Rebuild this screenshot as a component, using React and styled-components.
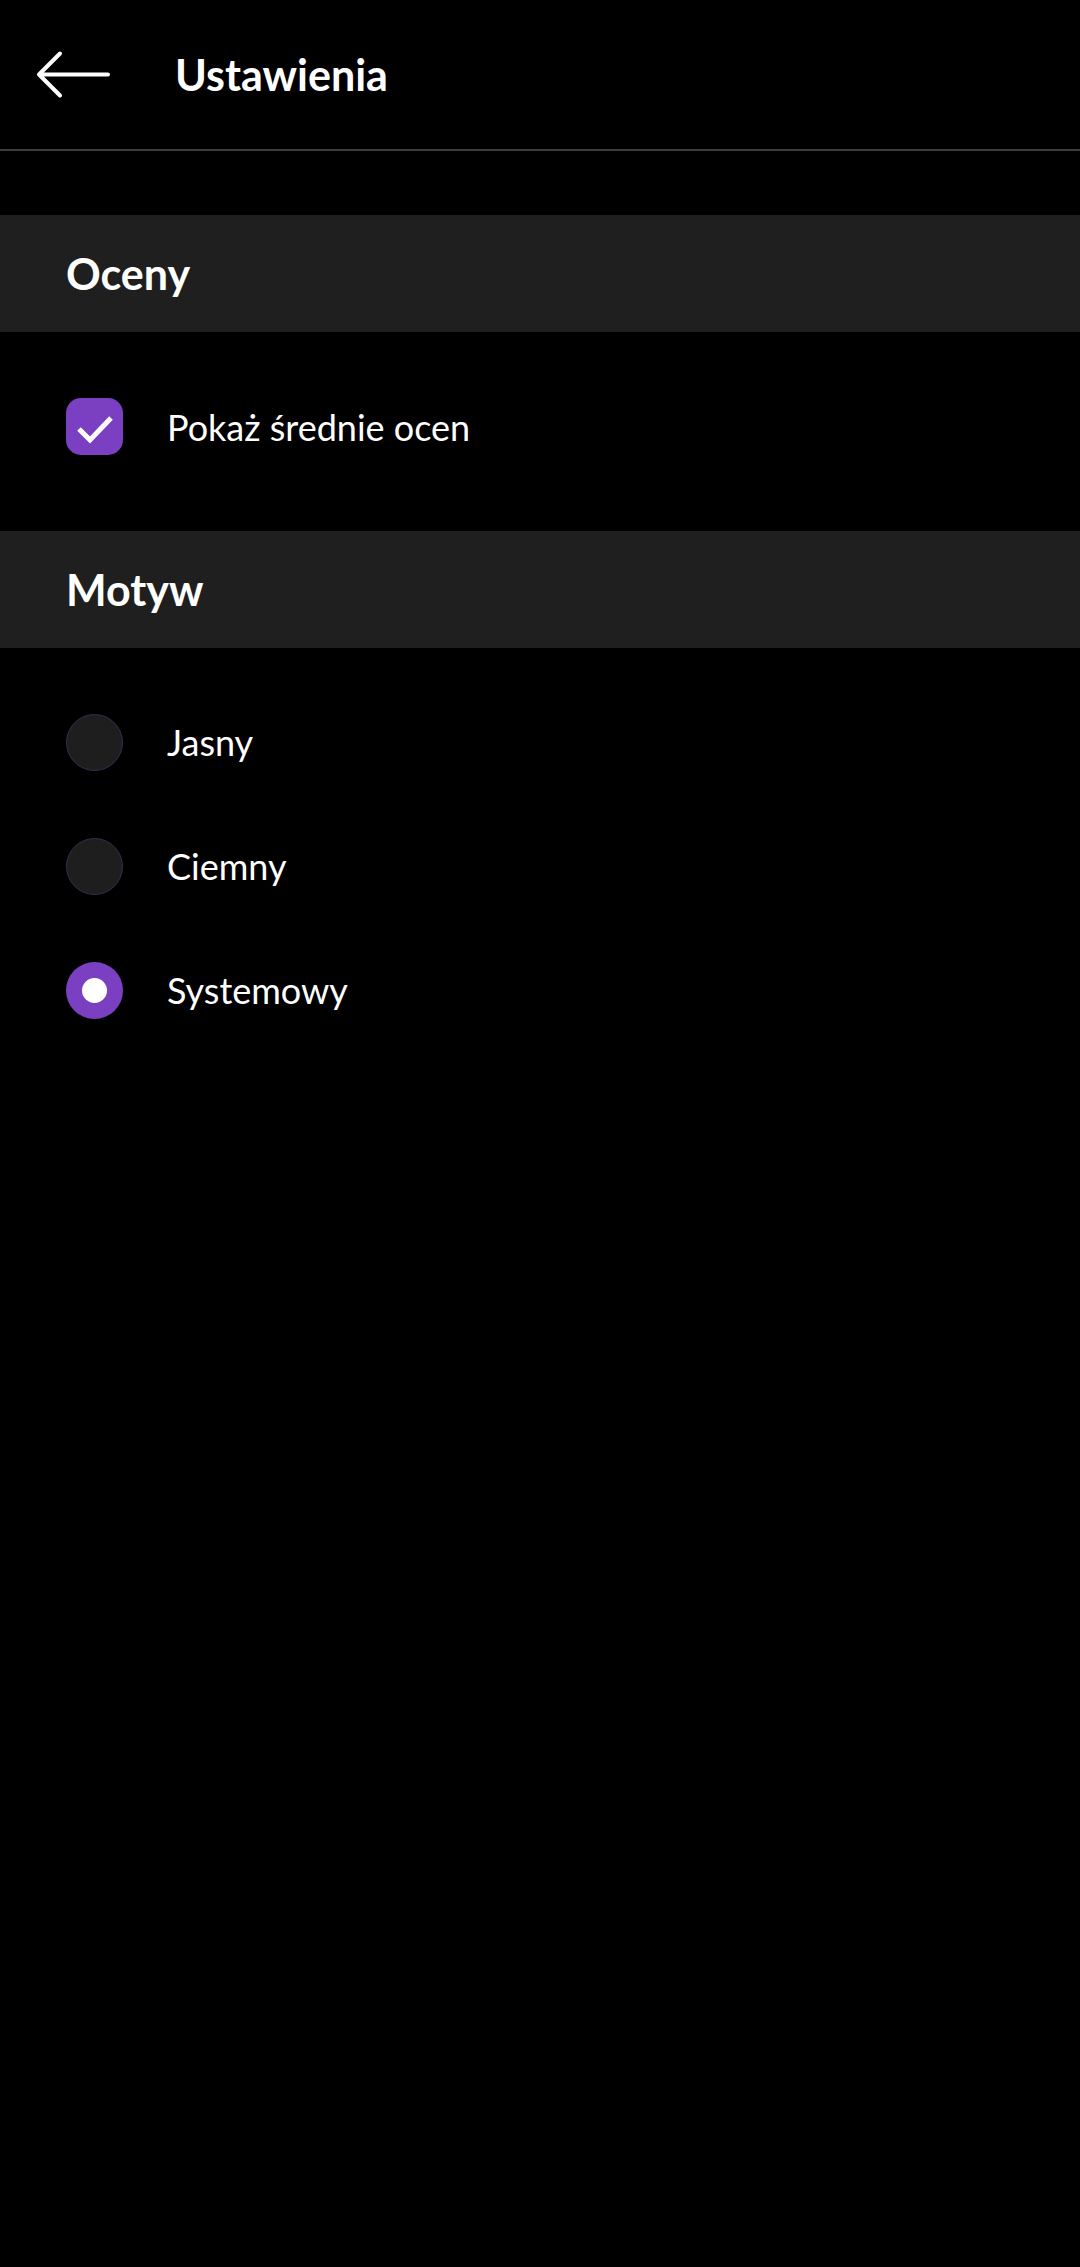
import React, { useState } from "react";
import styled, { createGlobalStyle } from "styled-components";

const GlobalStyle = createGlobalStyle`
  html, body {
    margin: 0;
    padding: 0;
    background: #000;
  }
  body {
    font-family: Lato, "Open Sans", sans-serif;
    color: #fff;
  }
`;

const Page = styled.div`
  min-height: 2267px;
  background: #000;
  display: flex;
  flex-direction: column;
`;

const TopBar = styled.header`
  height: 149px;
  display: flex;
  align-items: center;
  padding-left: 36px;
  border-bottom: 2px solid #3d3d3d;
  box-sizing: content-box;
`;

const BackButton = styled.button`
  width: 76px;
  height: 60px;
  padding: 0;
  background: none;
  border: none;
  display: flex;
  align-items: center;
  cursor: pointer;
`;

const Title = styled.h1`
  margin: 0 0 0 63px;
  font-size: 43px;
  font-weight: 700;
  color: #fff;
  line-height: 1;
`;

const Content = styled.div`
  padding-top: 64px;
`;

const SectionHeader = styled.div`
  height: 117px;
  background: #1f1f1f;
  display: flex;
  align-items: center;
  padding-left: 66px;
  font-size: 43px;
  font-weight: 700;
`;

const CheckRow = styled.label`
  display: flex;
  align-items: center;
  padding: 66px 0 76px 66px;
  cursor: pointer;
`;

const Box = styled.span`
  width: 57px;
  height: 57px;
  border-radius: 15px;
  background: ${(p) => (p.checked ? "#7b3fc2" : "#1e1e1e")};
  display: flex;
  align-items: center;
  justify-content: center;
  flex-shrink: 0;
`;

const Label = styled.span`
  margin-left: 44px;
  font-size: 36px;
  font-weight: 400;
  color: #fff;
`;

const RadioList = styled.div`
  padding-top: 32px;
  display: flex;
  flex-direction: column;
`;

const RadioRow = styled.label`
  height: 124px;
  display: flex;
  align-items: center;
  padding-left: 66px;
  cursor: pointer;
`;

const RadioDot = styled.span`
  width: 57px;
  height: 57px;
  border-radius: 50%;
  box-sizing: border-box;
  flex-shrink: 0;
  display: flex;
  align-items: center;
  justify-content: center;
  background: ${(p) => (p.selected ? "#7b3fc2" : "#1e1e1e")};
  border: ${(p) => (p.selected ? "none" : "1.5px solid #3a2c52")};

  &::after {
    content: "";
    display: ${(p) => (p.selected ? "block" : "none")};
    width: 25px;
    height: 25px;
    border-radius: 50%;
    background: #fff;
  }
`;

const BackArrow = () => (
  <svg width="76" height="50" viewBox="0 0 76 50" fill="none">
    <path
      d="M3 24.5 H72 M24 3.5 L3 24.5 L24 45.5"
      stroke="#fff"
      strokeWidth="4"
      strokeLinecap="round"
      strokeLinejoin="round"
    />
  </svg>
);

const themes = ["Jasny", "Ciemny", "Systemowy"];

export default function App() {
  const [showAvg, setShowAvg] = useState(true);
  const [theme, setTheme] = useState("Systemowy");

  return (
    <Page>
      <GlobalStyle />
      <TopBar>
        <BackButton aria-label="Wstecz">
          <BackArrow />
        </BackButton>
        <Title>Ustawienia</Title>
      </TopBar>
      <Content>
        <SectionHeader>Oceny</SectionHeader>
        <CheckRow onClick={() => setShowAvg(!showAvg)}>
          <Box checked={showAvg}>
            {showAvg && (
              <svg width="57" height="57" viewBox="0 0 57 57" fill="none">
                <path
                  d="M13 31 L24 42 L45 20"
                  stroke="#fff"
                  strokeWidth="5"
                  strokeLinecap="butt"
                  strokeLinejoin="miter"
                />
              </svg>
            )}
          </Box>
          <Label>Pokaż średnie ocen</Label>
        </CheckRow>
        <SectionHeader>Motyw</SectionHeader>
        <RadioList>
          {themes.map((t) => (
            <RadioRow key={t} onClick={() => setTheme(t)}>
              <RadioDot selected={theme === t} />
              <Label>{t}</Label>
            </RadioRow>
          ))}
        </RadioList>
      </Content>
    </Page>
  );
}
